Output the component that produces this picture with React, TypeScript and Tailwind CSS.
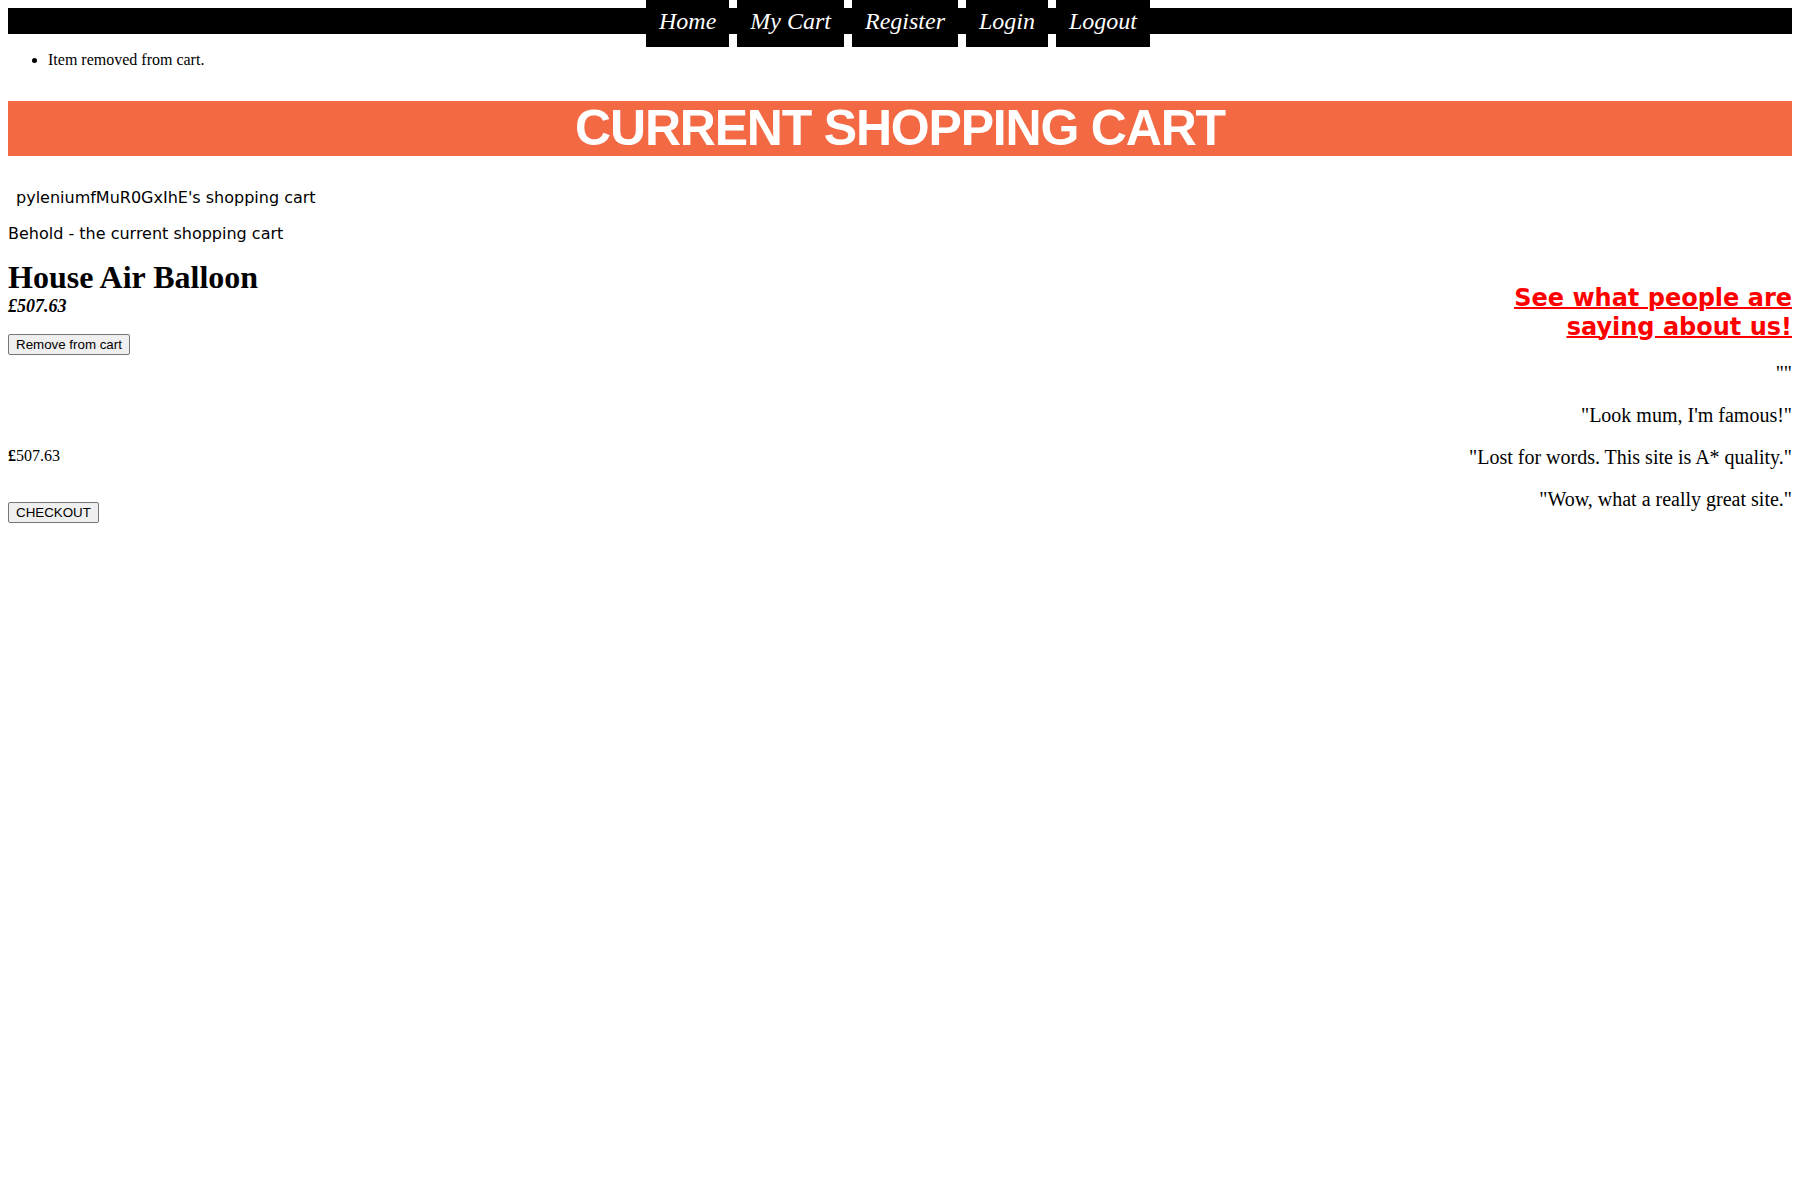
import React from 'react';

const serif = "font-['Liberation_Serif','Times_New_Roman',serif]";
const verdana = "font-['DejaVu_Sans',Verdana,sans-serif]";
const arial = "font-['Liberation_Sans',Arial,sans-serif]";

const navItems = ['Home', 'My Cart', 'Register', 'Login', 'Logout'];

const testimonials = [
  '""',
  '"Look mum, I\'m famous!"',
  '"Lost for words. This site is A* quality."',
  '"Wow, what a really great site."',
];

// looks like a default browser button
function PlainButton({ children }: { children: React.ReactNode }) {
  return (
    <button
      className={`h-[21px] px-[7px] border border-[#767676] rounded-[2px] bg-[#efefef] text-black text-[13.333px] leading-[15px] ${arial}`}
    >
      {children}
    </button>
  );
}

export default function App() {
  return (
    <div className={`min-h-screen bg-white text-black px-2 pb-2 ${serif}`}>
      {/* Nav bar */}
      <nav className="mt-2 h-[26px] bg-black flex justify-center pr-1">
        <div className="-mt-2 flex items-start gap-2">
          {navItems.map((item) => (
            <a
              key={item}
              href="#"
              className={`h-[47px] bg-black px-[13px] pt-[7.5px] leading-[27px] text-white italic text-[24px] ${serif}`}
            >
              {item}
            </a>
          ))}
        </div>
      </nav>

      {/* Flash messages */}
      <ul className="mt-[17px] pl-10 list-disc text-[16px] leading-[18px]">
        <li>Item removed from cart.</li>
      </ul>

      {/* Banner */}
      <h1
        className={`mt-[32px] h-[55px] bg-[#f26944] text-center text-white font-bold text-[50px] leading-[55px] tracking-[-1.2px] ${arial}`}
      >
        CURRENT SHOPPING CART
      </h1>

      <div className={`mt-[32px] pl-2 text-[16px] leading-[20px] ${verdana}`}>
        pyleniumfMuR0GxIhE's shopping cart
      </div>
      <div className={`mt-4 text-[16px] leading-[20px] ${verdana}`}>
        Behold - the current shopping cart
      </div>

      <div className="mt-[15px] flex justify-between">
        {/* Cart items */}
        <div className="flex flex-col items-start">
          <h2 className="text-[32px] leading-[36px] font-bold">House Air Balloon</h2>
          <div className="mt-[1px] text-[18px] leading-[21px] font-bold italic">£507.63</div>
          <div className="mt-[15px]">
            <PlainButton>Remove from cart</PlainButton>
          </div>
          <div className="mt-[91px] text-[16px] leading-[18px]">
            <span className="font-bold">£</span>507.63
          </div>
          <div className="mt-[35px]">
            <PlainButton>CHECKOUT</PlainButton>
          </div>
        </div>

        {/* Testimonials */}
        <div className="pt-[25px] text-right">
          <h2
            className={`text-[24px] leading-[28.5px] font-bold text-[#ff0000] underline decoration-2 ${verdana}`}
          >
            <a href="#">
              See what people are
              <br />
              saying about us!
            </a>
          </h2>
          <div className="mt-[21px] flex flex-col gap-[19px] text-[20px] leading-[23px]">
            {testimonials.map((t, i) => (
              <p key={i}>{t}</p>
            ))}
          </div>
        </div>
      </div>
    </div>
  );
}
